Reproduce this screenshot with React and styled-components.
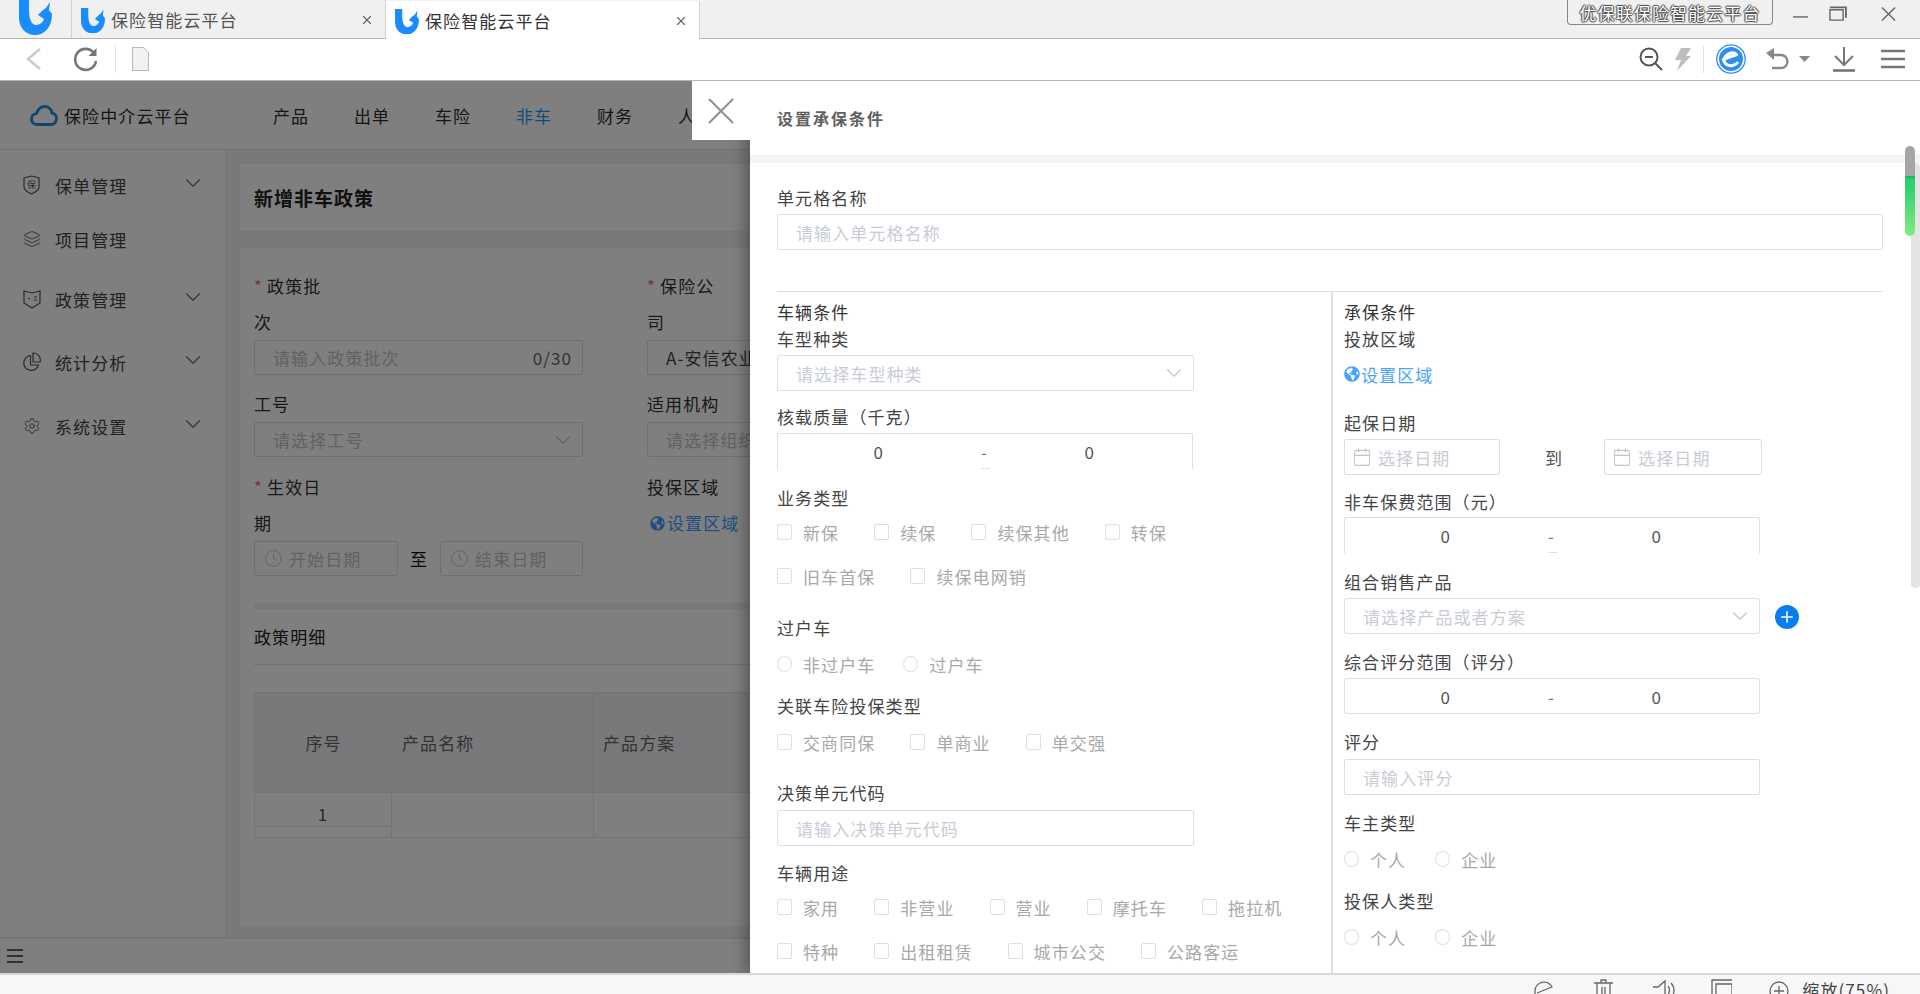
import styled, { createGlobalStyle } from 'styled-components';
import { Calendar, ChevronDown, Clock, Layers, Plus, Settings, X } from 'lucide-react';
import { FaGlobeAmericas } from 'react-icons/fa';

const GlobalStyle = createGlobalStyle`
  html, body { margin: 0; padding: 0; background: #fff; }
  body {
    font-family: "Noto Sans CJK SC", "Noto Sans", sans-serif;
    font-size: 17px;
    letter-spacing: 1.1px;
    color: #444;
  }
  * { box-sizing: border-box; }
`;

function BrandLogo({ size = 34 }) {
  return (
    <svg width={size} height={size * 1.06} viewBox="0 0 33 35">
      <path
        fill="#1a8cff"
        d="M0 0h10c0 10-1 24 7 25 4 0 7-3 8-6l-6-4 5-5 3-2 4-6-1 8 3 4c0 14-8 21-17 21C6 35 0 27 0 18z"
      />
    </svg>
  );
}

const Cloud = () => (
  <svg width="28" height="21" viewBox="0 0 28 21" fill="none" stroke="#1c8cd8" strokeWidth="2.8">
    <path d="M7 19.500C3.600 19.500 1.500 17 1.500 14s2.200-5.300 5-5.400C7.600 4.500 10.800 1.500 14.500 1.500c4 0 7 2.800 7.600 6.700 2.700.5 4.400 2.900 4.400 5.600 0 3-2.300 5.700-5.500 5.700z" />
  </svg>
);

const MenuIcon = ({ kind }) => {
  if (kind === 'layers') return <Layers size={18} strokeWidth={1.2} color="#555" />;
  if (kind === 'settings') return <Settings size={18} strokeWidth={1.2} color="#555" />;
  if (kind === 'pie') {
    return (
      <svg width="18" height="20" viewBox="0 0 18 20" fill="none" stroke="#555" strokeWidth="1.2">
        <path d="M7.500 3.500a7.500 7.500 0 1 0 8 9.500h-8z" />
        <path d="M10 1a7 7 0 0 1 7 9h-7z" />
      </svg>
    );
  }
  if (kind === 'policy') {
    return (
      <svg width="18" height="20" viewBox="0 0 18 20" fill="none" stroke="#555" strokeWidth="1.2">
        <path d="M1 2l8 2 8-2v12l-8 5-8-5z" />
        <path d="M11 8h3M11 11h3M5 9l2 1" />
      </svg>
    );
  }
  return (
    <svg width="17" height="20" viewBox="0 0 17 20" fill="none" stroke="#555" strokeWidth="1.2">
      <path d="M8.500 1l7.500 2v9c0 3-3 5-7.500 7C4 17 1 15 1 12V3z" />
      <text x="8.500" y="13" fontSize="9" textAnchor="middle" fill="#555" stroke="none" letterSpacing="0">
        保
      </text>
    </svg>
  );
};

const Root = styled.div`
  width: 1920px;
  height: 994px;
  display: flex;
  flex-direction: column;
  overflow: hidden;
`;

/* browser chrome */
const TabBar = styled.div`
  height: 39px;
  background: #f0f0f0;
  border-bottom: 1px solid #b4b4b4;
  display: flex;
`;

const LogoSlot = styled.div`
  width: 72px;
  padding-left: 19px;
  border-right: 1px solid #d4d4d4;
`;

const Tab = styled.div`
  width: 314px;
  height: ${(p) => (p.$active ? '39px' : '38px')};
  margin-top: ${(p) => (p.$active ? '1px' : '0')};
  padding: 8px 11px 0 9px;
  background: ${(p) => (p.$active ? '#fff' : '#f0f0f0')};
  border-right: 1px solid #d0d0d0;
  display: flex;
  align-items: flex-start;
  gap: 6px;
  color: ${(p) => (p.$active ? '#333' : '#555')};
  line-height: 24px;
  position: relative;
  z-index: 1;
`;

const TabTitle = styled.span`
  flex: 1;
`;

const TabClose = styled(X)`
  margin-top: 5px;
  color: #666;
`;

const TitlePlate = styled.div`
  margin-left: auto;
  width: 206px;
  height: 25px;
  border: 1px solid #888;
  border-top: 0;
  border-radius: 0 0 4px 4px;
  text-align: center;
  line-height: 26px;
  color: #fff;
  text-shadow: 1px 0 1px #444, -1px 0 1px #444, 0 1px 1px #444, 0 -1px 1px #444;
`;

const WindowButtons = styled.div`
  width: 147px;
  display: flex;
  align-items: flex-start;
  padding: 6px 24px 0 20px;
  gap: 21px;
`;

const Toolbar = styled.div`
  height: 42px;
  background: #fff;
  border-bottom: 1px solid #b4b4b4;
  display: flex;
  align-items: center;
  padding: 0 15px 1px 25px;
`;

const ToolSep = styled.span`
  width: 1px;
  height: 28px;
  background: #e2e2e2;
  margin: ${(p) => p.$margin};
`;

const ToolRight = styled.div`
  margin-left: auto;
  display: flex;
  align-items: center;
`;

/* page under the mask */
const Main = styled.div`
  flex: 1;
  position: relative;
  overflow: hidden;
  min-height: 0;
`;

const Page = styled.div`
  height: 100%;
  display: flex;
  flex-direction: column;
  background: #fff;
  color: #333;
`;

const TopNav = styled.div`
  height: 69px;
  flex: none;
  border-bottom: 1px solid #e4e4e4;
  display: flex;
  align-items: center;
  padding-left: 30px;
`;

const Brand = styled.div`
  width: 243px;
  display: flex;
  align-items: center;
  gap: 6px;
  color: #2c2c2c;
`;

const NavItem = styled.div`
  margin-right: 44.800px;
  color: ${(p) => (p.$active ? '#1e98ff' : '#2c2c2c')};
`;

const PageBody = styled.div`
  flex: 1;
  display: flex;
  min-height: 0;
`;

const Sidebar = styled.div`
  width: 226px;
  flex: none;
  padding-top: 17px;
  border-right: 1px solid #e8e8e8;
`;

const MenuItem = styled.div`
  height: 36px;
  margin-top: ${(p) => p.$mt || 0}px;
  padding-left: 23px;
  display: flex;
  align-items: center;
  position: relative;
`;

const MenuText = styled.span`
  position: absolute;
  left: 55px;
  color: #444;
`;

const MenuChevron = styled(ChevronDown)`
  position: absolute;
  left: 180px;
  top: 3px;
  color: #666;
`;

const ContentArea = styled.div`
  flex: 1;
  background: #f0f2f5;
  padding: 14px 0 0 14px;
  min-width: 0;
`;

const TitleCard = styled.div`
  height: 67px;
  background: #fff;
  padding-left: 14px;
  display: flex;
  align-items: center;
  font-size: 19px;
  letter-spacing: 1px;
  font-weight: 700;
  color: #222;
`;

const FormCard = styled.div`
  height: 678px;
  margin-top: 17px;
  background: #fff;
  padding: 20px 0 0 14px;
`;

const FormGrid = styled.div`
  display: grid;
  grid-template-columns: 329px 329px;
  column-gap: 64px;
`;

const PageField = styled.div`
  margin-top: ${(p) => p.$mt || 0}px;
`;

const PageLabel = styled.div`
  line-height: 36px;
  color: #333;
  width: 70px;
  white-space: ${(p) => (p.$nowrap ? 'nowrap' : 'normal')};
`;

const Star = styled.span`
  color: #f56c6c;
  margin-right: 4px;
`;

const PageBox = styled.div`
  width: ${(p) => p.$width || '100%'};
  height: 35px;
  border: 1px solid #dcdfe6;
  border-radius: 2px;
  background: #fff;
  display: flex;
  align-items: center;
  padding: 0 ${(p) => (p.$compact ? '9px' : '18px')};
  gap: 6px;
  color: #c0c4cc;
  overflow: hidden;
  white-space: nowrap;
`;

const Spacer = styled.span`
  flex: 1;
`;

const BoxValue = styled.span`
  color: ${(p) => p.$color};
  margin-right: ${(p) => p.$mr || 0}px;
`;

const PageChevron = styled(ChevronDown)`
  margin-right: -12px;
`;

const DateRow = styled.div`
  display: flex;
  align-items: center;
  color: #111;
`;

const RangeWord = styled.span`
  width: 42px;
  text-align: center;
`;

const PageLink = styled.div`
  display: flex;
  align-items: center;
  gap: 2px;
  line-height: 36px;
  padding-left: 3px;
  color: #409eff;
`;

const Band = styled.div`
  height: 6px;
  margin-top: 27px;
  background: #f0f2f5;
`;

const DetailTitle = styled.div`
  margin-top: 16px;
  line-height: 24px;
  padding-bottom: 15px;
  border-bottom: 1px solid #e0e2e8;
  color: #222;
`;

const Table = styled.div`
  margin-top: 27px;
  width: 900px;
  border: 1px solid #e4e6ec;
  border-right: 0;
`;

const HeadRow = styled.div`
  height: 100px;
  background: #f2f3f6;
  display: flex;
  align-items: center;
  color: #666;
  border-bottom: 1px solid #e4e6ec;
`;

const HeadCell = styled.div`
  width: ${(p) => p.$width}px;
  height: 100%;
  display: flex;
  align-items: center;
  justify-content: ${(p) => (p.$center ? 'center' : 'flex-start')};
  padding-left: ${(p) => (p.$center ? 0 : 10)}px;
  border-right: ${(p) => (p.$line ? '1px solid #e4e6ec' : '0')};
`;

const BodyRow = styled.div`
  height: 44px;
  display: flex;
`;

const BodyCell = styled.div`
  width: ${(p) => p.$width}px;
  border-right: 1px solid #e4e6ec;
`;

const IndexCell = styled.div`
  height: 34px;
  padding-top: 8px;
  line-height: 26px;
  text-align: center;
  color: #555;
  border-bottom: 1px solid #e4e6ec;
`;

const BottomBar = styled.div`
  height: 36px;
  flex: none;
  border-top: 2px solid #e8e8e8;
  padding: 0 0 0 6px;
  display: flex;
  align-items: center;
`;

const Mask = styled.div`
  position: absolute;
  inset: 0;
  background: rgba(0, 0, 0, 0.5);
`;

/* drawer */
const Drawer = styled.div`
  position: absolute;
  top: 0;
  right: 0;
  bottom: 0;
  width: 1170px;
  background: #fff;
  display: flex;
  flex-direction: column;
  box-shadow: -6px 0 12px rgba(0, 0, 0, 0.28);
`;

const CloseBox = styled.div`
  position: absolute;
  top: 0;
  right: 100%;
  width: 58px;
  height: 59px;
  background: #fff;
  display: flex;
  align-items: center;
  justify-content: center;
  color: #8a8f99;
`;

const DrawerHead = styled.div`
  height: 82px;
  flex: none;
  padding: 0 0 0 27px;
  border-bottom: 8px solid #f2f3f5;
  display: flex;
  align-items: center;
  font-size: 16px;
  font-weight: 700;
  letter-spacing: 2px;
  color: #606060;
`;

const DrawerBody = styled.div`
  flex: 1;
  min-height: 0;
  display: flex;
  flex-direction: column;
  padding: 23px 37px 0 27px;
`;

const Field = styled.div`
  margin-top: ${(p) => p.$mt || 0}px;
`;

const Label = styled.div`
  line-height: 24px;
  height: 24px;
  margin-bottom: ${(p) => (p.$gap === undefined ? 4 : p.$gap)}px;
  color: #444;
  white-space: nowrap;
`;

const Control = styled.div`
  width: ${(p) => p.$width || '100%'};
  height: ${(p) => (p.$cut ? 37 : 36)}px;
  border: 1px solid #dcdfe6;
  border-bottom-color: ${(p) => (p.$cut ? 'transparent' : '#dcdfe6')};
  border-radius: 2px;
  display: flex;
  align-items: center;
  padding: 0 ${(p) => (p.$compact ? '7px' : '18px')};
  gap: 6px;
  color: #c8ccd4;
  position: relative;
  white-space: nowrap;
`;

const SelectChevron = styled(ChevronDown)`
  margin-left: auto;
  margin-right: -12px;
  color: #c0c4cc;
`;

const RangeBox = styled(Control)`
  padding: 0;
  gap: 0;
  color: #555;
`;

const RangeValue = styled.span`
  width: ${(p) => p.$width}px;
  text-align: right;
`;

const RangeDash = styled.span`
  width: ${(p) => p.$width}px;
  text-align: right;
  color: #777;
`;

const CutMark = styled.span`
  position: absolute;
  left: 50%;
  bottom: 0;
  width: 9px;
  height: 1px;
  margin-left: -4px;
  background: #dcdfe6;
`;

const Columns = styled.div`
  flex: 1;
  min-height: 0;
  margin-top: 41px;
  border-top: 1px solid #dcdfe6;
  display: flex;
`;

const LeftColumn = styled.div`
  width: 554px;
  flex: none;
`;

const RightColumn = styled.div`
  flex: 1;
  padding-left: 11px;
  border-left: 2px solid #dcdfe6;
`;

const SectionTitle = styled.div`
  margin-top: 8px;
  margin-bottom: 3px;
  line-height: 24px;
  color: #333;
`;

const Options = styled.div`
  height: 36px;
  margin-top: ${(p) => p.$mt || 0}px;
  display: flex;
  align-items: center;
  gap: ${(p) => p.$gap || 35}px;
`;

const Option = styled.span`
  display: flex;
  align-items: center;
  gap: 11px;
  color: #a8a8a8;
  white-space: nowrap;
`;

const Tick = styled.span`
  width: 15px;
  height: 16px;
  flex: none;
  background: #fff;
  border: 1px solid #dcdfe6;
  border-radius: ${(p) => (p.$round ? '50%' : '2px')};
`;

const AreaLink = styled.div`
  height: 24px;
  display: flex;
  align-items: center;
  gap: 1px;
  color: #4aa3ff;
`;

const DateRange = styled.div`
  display: flex;
  align-items: center;
  color: #555;
`;

const DateWord = styled.span`
  margin: 0 41px 0 45px;
`;

const SelectRow = styled.div`
  display: flex;
  align-items: center;
  gap: 15px;
`;

const AddButton = styled.span`
  width: 24px;
  height: 24px;
  margin-top: 2px;
  border-radius: 50%;
  background: #0a7df0;
  display: flex;
  align-items: center;
  justify-content: center;
  color: #fff;
`;

const ScrollRail = styled.div`
  position: absolute;
  right: 0;
  top: 82px;
  width: 9px;
  height: 425px;
  background: #e4e4e4;
  border-radius: 4px;
`;

const ScrollThumb = styled.div`
  position: absolute;
  right: 5px;
  top: 65px;
  width: 10px;
  height: 90px;
  border-radius: 5px;
  background: linear-gradient(#a6a6a6 0 33%, #1bb665 33% 36%, #25cd6e 36%, #80ea80);
`;

/* status bar, its content is cut off by the window bottom */
const StatusBar = styled.div`
  height: 21px;
  flex: none;
  overflow: hidden;
  background: #f7f7f7;
  border-top: 2px solid #d8d8d8;
  display: flex;
  padding: 4px 30px 0 0;
  justify-content: flex-end;
  color: #555;
`;

const StatusIcon = styled.svg`
  flex: none;
  margin-left: ${(p) => p.$ml}px;
  fill: none;
  stroke: #666;
  stroke-width: 1.3;
`;

const ZoomText = styled.span`
  margin-left: 13px;
  margin-top: -1px;
  line-height: 24px;
  color: #444;
`;

const Chevron = () => <MenuChevron size={26} strokeWidth={1} />;

const TextInput = ({ text, ...rest }) => <Control {...rest}>{text}</Control>;

const Select = ({ text, ...rest }) => (
  <Control {...rest}>
    {text}
    <SelectChevron size={26} strokeWidth={1} />
  </Control>
);

const Range = ({ cut }) => (
  <RangeBox $cut={cut} $width="416px">
    <RangeValue $width={106}>0</RangeValue>
    <RangeDash $width={104}>-</RangeDash>
    <RangeValue $width={107}>0</RangeValue>
    {cut && <CutMark />}
  </RangeBox>
);

const DateBox = ({ width }) => (
  <Control $width={width} $compact>
    <Calendar size={20} strokeWidth={1.3} color="#c0c4cc" />
    选择日期
  </Control>
);

const OptionRow = ({ items, round, gap, mt }) => (
  <Options $gap={gap} $mt={mt}>
    {items.map((t) => (
      <Option key={t}>
        <Tick $round={round} />
        {t}
      </Option>
    ))}
  </Options>
);

const menu = [
  { text: '保单管理', icon: 'shield', arrow: true },
  { text: '项目管理', icon: 'layers', mt: 18 },
  { text: '政策管理', icon: 'policy', arrow: true, mt: 24 },
  { text: '统计分析', icon: 'pie', arrow: true, mt: 27 },
  { text: '系统设置', icon: 'settings', arrow: true, mt: 28 },
];

const navs = ['产品', '出单', '车险', '非车', '财务', '人员'];

function BackgroundPage() {
  return (
    <Page>
      <TopNav>
        <Brand>
          <Cloud />
          保险中介云平台
        </Brand>
        {navs.map((n) => (
          <NavItem key={n} $active={n === '非车'}>
            {n}
          </NavItem>
        ))}
      </TopNav>
      <PageBody>
        <Sidebar>
          {menu.map((m) => (
            <MenuItem key={m.text} $mt={m.mt}>
              <MenuIcon kind={m.icon} />
              <MenuText>{m.text}</MenuText>
              {m.arrow && <Chevron />}
            </MenuItem>
          ))}
        </Sidebar>
        <ContentArea>
          <TitleCard>新增非车政策</TitleCard>
          <FormCard>
            <FormGrid>
              <PageField>
                <PageLabel>
                  <Star>*</Star>政策批次
                </PageLabel>
                <PageBox>
                  请输入政策批次
                  <Spacer />
                  <BoxValue $color="#666" $mr={-8}>
                    0/30
                  </BoxValue>
                </PageBox>
              </PageField>
              <PageField>
                <PageLabel>
                  <Star>*</Star>保险公司
                </PageLabel>
                <PageBox>
                  <BoxValue $color="#444">A-安信农业保险</BoxValue>
                </PageBox>
              </PageField>
              <PageField $mt={11}>
                <PageLabel $nowrap>工号</PageLabel>
                <PageBox>
                  请选择工号
                  <Spacer />
                  <PageChevron size={26} strokeWidth={1} />
                </PageBox>
              </PageField>
              <PageField $mt={11}>
                <PageLabel $nowrap>适用机构</PageLabel>
                <PageBox>请选择组织机构</PageBox>
              </PageField>
              <PageField $mt={12}>
                <PageLabel>
                  <Star>*</Star>生效日期
                </PageLabel>
                <DateRow>
                  <PageBox $width="144px" $compact>
                    <Clock size={19} strokeWidth={1.2} />
                    开始日期
                  </PageBox>
                  <RangeWord>至</RangeWord>
                  <PageBox $width="143px" $compact>
                    <Clock size={19} strokeWidth={1.2} />
                    结束日期
                  </PageBox>
                </DateRow>
              </PageField>
              <PageField $mt={12}>
                <PageLabel $nowrap>投保区域</PageLabel>
                <PageLink>
                  <FaGlobeAmericas size={15} />
                  设置区域
                </PageLink>
              </PageField>
            </FormGrid>
            <Band />
            <DetailTitle>政策明细</DetailTitle>
            <Table>
              <HeadRow>
                <HeadCell $width={137} $center>
                  序号
                </HeadCell>
                <HeadCell $width={201} $line>
                  产品名称
                </HeadCell>
                <HeadCell $width={300}>产品方案</HeadCell>
              </HeadRow>
              <BodyRow>
                <BodyCell $width={137}>
                  <IndexCell>1</IndexCell>
                </BodyCell>
                <BodyCell $width={202} />
              </BodyRow>
            </Table>
          </FormCard>
        </ContentArea>
      </PageBody>
      <BottomBar>
        <svg width="18" height="16" viewBox="0 0 18 16" stroke="#333" strokeWidth="1.4">
          <path d="M1 2h16M1 8h16M1 14h16" />
        </svg>
      </BottomBar>
    </Page>
  );
}

function PolicyDrawer() {
  return (
    <Drawer>
      <CloseBox>
        <X size={46} strokeWidth={1} />
      </CloseBox>
      <DrawerHead>设置承保条件</DrawerHead>
      <DrawerBody>
        <Field>
          <Label>单元格名称</Label>
          <TextInput text="请输入单元格名称" />
        </Field>
        <Columns>
          <LeftColumn>
            <SectionTitle>车辆条件</SectionTitle>
            <Field>
              <Label>车型种类</Label>
              <Select text="请选择车型种类" $width="417px" />
            </Field>
            <Field $mt={14}>
              <Label>核载质量（千克）</Label>
              <Range cut />
            </Field>
            <Field $mt={16}>
              <Label>业务类型</Label>
              <OptionRow items={['新保', '续保', '续保其他', '转保']} />
              <OptionRow items={['旧车首保', '续保电网销']} mt={8} />
            </Field>
            <Field $mt={22}>
              <Label $gap={6}>过户车</Label>
              <OptionRow items={['非过户车', '过户车']} round gap={28} />
            </Field>
            <Field $mt={12}>
              <Label $gap={6}>关联车险投保类型</Label>
              <OptionRow items={['交商同保', '单商业', '单交强']} />
            </Field>
            <Field $mt={21}>
              <Label $gap={5}>决策单元代码</Label>
              <TextInput text="请输入决策单元代码" $width="417px" />
            </Field>
            <Field $mt={15}>
              <Label>车辆用途</Label>
              <OptionRow items={['家用', '非营业', '营业', '摩托车', '拖拉机']} />
              <OptionRow items={['特种', '出租租赁', '城市公交', '公路客运']} mt={8} />
            </Field>
          </LeftColumn>
          <RightColumn>
            <SectionTitle>承保条件</SectionTitle>
            <Field>
              <Label $gap={11}>投放区域</Label>
              <AreaLink>
                <FaGlobeAmericas size={16} />
                设置区域
              </AreaLink>
            </Field>
            <Field $mt={25}>
              <Label>起保日期</Label>
              <DateRange>
                <DateBox width="156px" />
                <DateWord>到</DateWord>
                <DateBox width="158px" />
              </DateRange>
            </Field>
            <Field $mt={15}>
              <Label $gap={3}>非车保费范围（元）</Label>
              <Range cut />
            </Field>
            <Field $mt={16}>
              <Label>组合销售产品</Label>
              <SelectRow>
                <Select text="请选择产品或者方案" $width="416px" />
                <AddButton>
                  <Plus size={18} strokeWidth={2} />
                </AddButton>
              </SelectRow>
            </Field>
            <Field $mt={16}>
              <Label>综合评分范围（评分）</Label>
              <Range />
            </Field>
            <Field $mt={16}>
              <Label $gap={5}>评分</Label>
              <TextInput text="请输入评分" $width="416px" />
            </Field>
            <Field $mt={16}>
              <Label $gap={6}>车主类型</Label>
              <OptionRow items={['个人', '企业']} round gap={29} />
            </Field>
            <Field $mt={12}>
              <Label $gap={6}>投保人类型</Label>
              <OptionRow items={['个人', '企业']} round gap={29} />
            </Field>
          </RightColumn>
        </Columns>
      </DrawerBody>
      <ScrollRail />
      <ScrollThumb />
    </Drawer>
  );
}

export default function App() {
  return (
    <Root>
      <GlobalStyle />
      <TabBar>
        <LogoSlot>
          <BrandLogo size={33} />
        </LogoSlot>
        <Tab>
          <BrandLogo size={24} />
          <TabTitle>保险智能云平台</TabTitle>
          <TabClose size={14} />
        </Tab>
        <Tab $active>
          <BrandLogo size={24} />
          <TabTitle>保险智能云平台</TabTitle>
          <TabClose size={14} />
        </Tab>
        <TitlePlate>优保联保险智能云平台</TitlePlate>
        <WindowButtons>
          <svg width="16" height="20" viewBox="0 0 16 20" stroke="#666" strokeWidth="1.5">
            <path d="M0 11h16" />
          </svg>
          <svg width="19" height="16" viewBox="0 0 19 16" fill="none" stroke="#666" strokeWidth="1.5">
            <path d="M1 3.500h14v11H1z" />
            <path d="M1 1h17v11" strokeWidth="2" />
          </svg>
          <svg width="16" height="16" viewBox="0 0 16 16" stroke="#666" strokeWidth="1.5" style={{ marginLeft: 13 }}>
            <path d="M1 1l14 14M15 1L1 15" />
          </svg>
        </WindowButtons>
      </TabBar>
      <Toolbar>
        <svg width="17" height="22" viewBox="0 0 17 22" fill="none" stroke="#cacaca" strokeWidth="2.4">
          <path d="M15 1L3 11l12 10" />
        </svg>
        <svg width="25" height="25" viewBox="0 0 25 25" fill="none" stroke="#777" strokeWidth="2.6" style={{ marginLeft: 31 }}>
          <path d="M21 6a10.500 10.500 0 1 0 2 8" />
          <path d="M23.500 1v8h-8z" fill="#777" stroke="none" />
        </svg>
        <ToolSep $margin="0 16px 0 17px" />
        <svg width="17" height="24" viewBox="0 0 17 24" fill="#f2f2f2" stroke="#b8b8b8">
          <path d="M.5.500h11l5 5v18H.5z" />
        </svg>
        <ToolRight>
          <svg width="24" height="24" viewBox="0 0 24 24" fill="none" stroke="#555" strokeWidth="2">
            <circle cx="10" cy="10" r="8.500" />
            <path d="M16 16l7 7M6 10h8" />
          </svg>
          <svg width="16" height="23" viewBox="0 0 16 23" fill="#bdbdbd" style={{ marginLeft: 12 }}>
            <path d="M6 0h10l-5 8h5L2 23l4-11H0z" />
          </svg>
          <ToolSep $margin="0 12px" />
          <svg width="30" height="30" viewBox="0 0 30 30" fill="none">
            <circle cx="15" cy="15" r="14.200" stroke="#2d8ff5" strokeWidth="1.300" />
            <circle cx="15" cy="15" r="12" fill="#2d8ff5" />
            <path d="M6 16c3-1 9-4 14-5 1.500 0-1-3-5-2-4 1-7 4-7 7 0 4 5 7 10 5 2-.7 3-1.500 4-3" stroke="#fff" strokeWidth="3" />
          </svg>
          <svg width="23" height="22" viewBox="0 0 23 22" fill="none" stroke="#888" strokeWidth="2.4" style={{ marginLeft: 20 }}>
            <path d="M6 7h9a6 6 0 0 1 0 13H6" />
            <path d="M8 0v12L0 5z" fill="#888" stroke="none" />
          </svg>
          <svg width="11" height="6" viewBox="0 0 11 6" fill="#888" style={{ marginLeft: 10 }}>
            <path d="M0 0h11L5.500 6z" />
          </svg>
          <svg width="22" height="25" viewBox="0 0 22 25" fill="none" stroke="#777" strokeWidth="2" style={{ marginLeft: 23 }}>
            <path d="M11 0v18M2 9l9 9 9-9" />
            <path d="M0 23.500h22" strokeWidth="2.600" />
          </svg>
          <svg width="24" height="20" viewBox="0 0 24 20" stroke="#777" strokeWidth="2.600" style={{ marginLeft: 26 }}>
            <path d="M0 2h24M0 10h24M0 18h24" />
          </svg>
        </ToolRight>
      </Toolbar>
      <Main>
        <BackgroundPage />
        <Mask />
        <PolicyDrawer />
      </Main>
      <StatusBar>
        <StatusIcon $ml={0} width="20" height="24" viewBox="0 0 20 24">
          <path d="M1 22V12a9 9 0 0 1 17-4L3 14M6 20h13" />
        </StatusIcon>
        <StatusIcon $ml={40} width="19" height="24" viewBox="0 0 19 24">
          <path d="M0 4h19M3 4v20h13V4M7 4V1h5v3M8 8v12M11 8v12" />
        </StatusIcon>
        <StatusIcon $ml={40} width="22" height="24" viewBox="0 0 22 24">
          <path d="M0 8h5l7-6v22M15 7c2 2 2 6 0 9M18 4c4 4 4 11 0 15" />
        </StatusIcon>
        <StatusIcon $ml={36} width="21" height="24" viewBox="0 0 21 24">
          <path d="M1 20V1h20M5 24V5h16v19" />
        </StatusIcon>
        <StatusIcon $ml={37} width="20" height="24" viewBox="0 0 20 24">
          <circle cx="10" cy="12" r="9" />
          <path d="M5 12h10M10 7v10" />
        </StatusIcon>
        <ZoomText>缩放(75%)</ZoomText>
      </StatusBar>
    </Root>
  );
}
